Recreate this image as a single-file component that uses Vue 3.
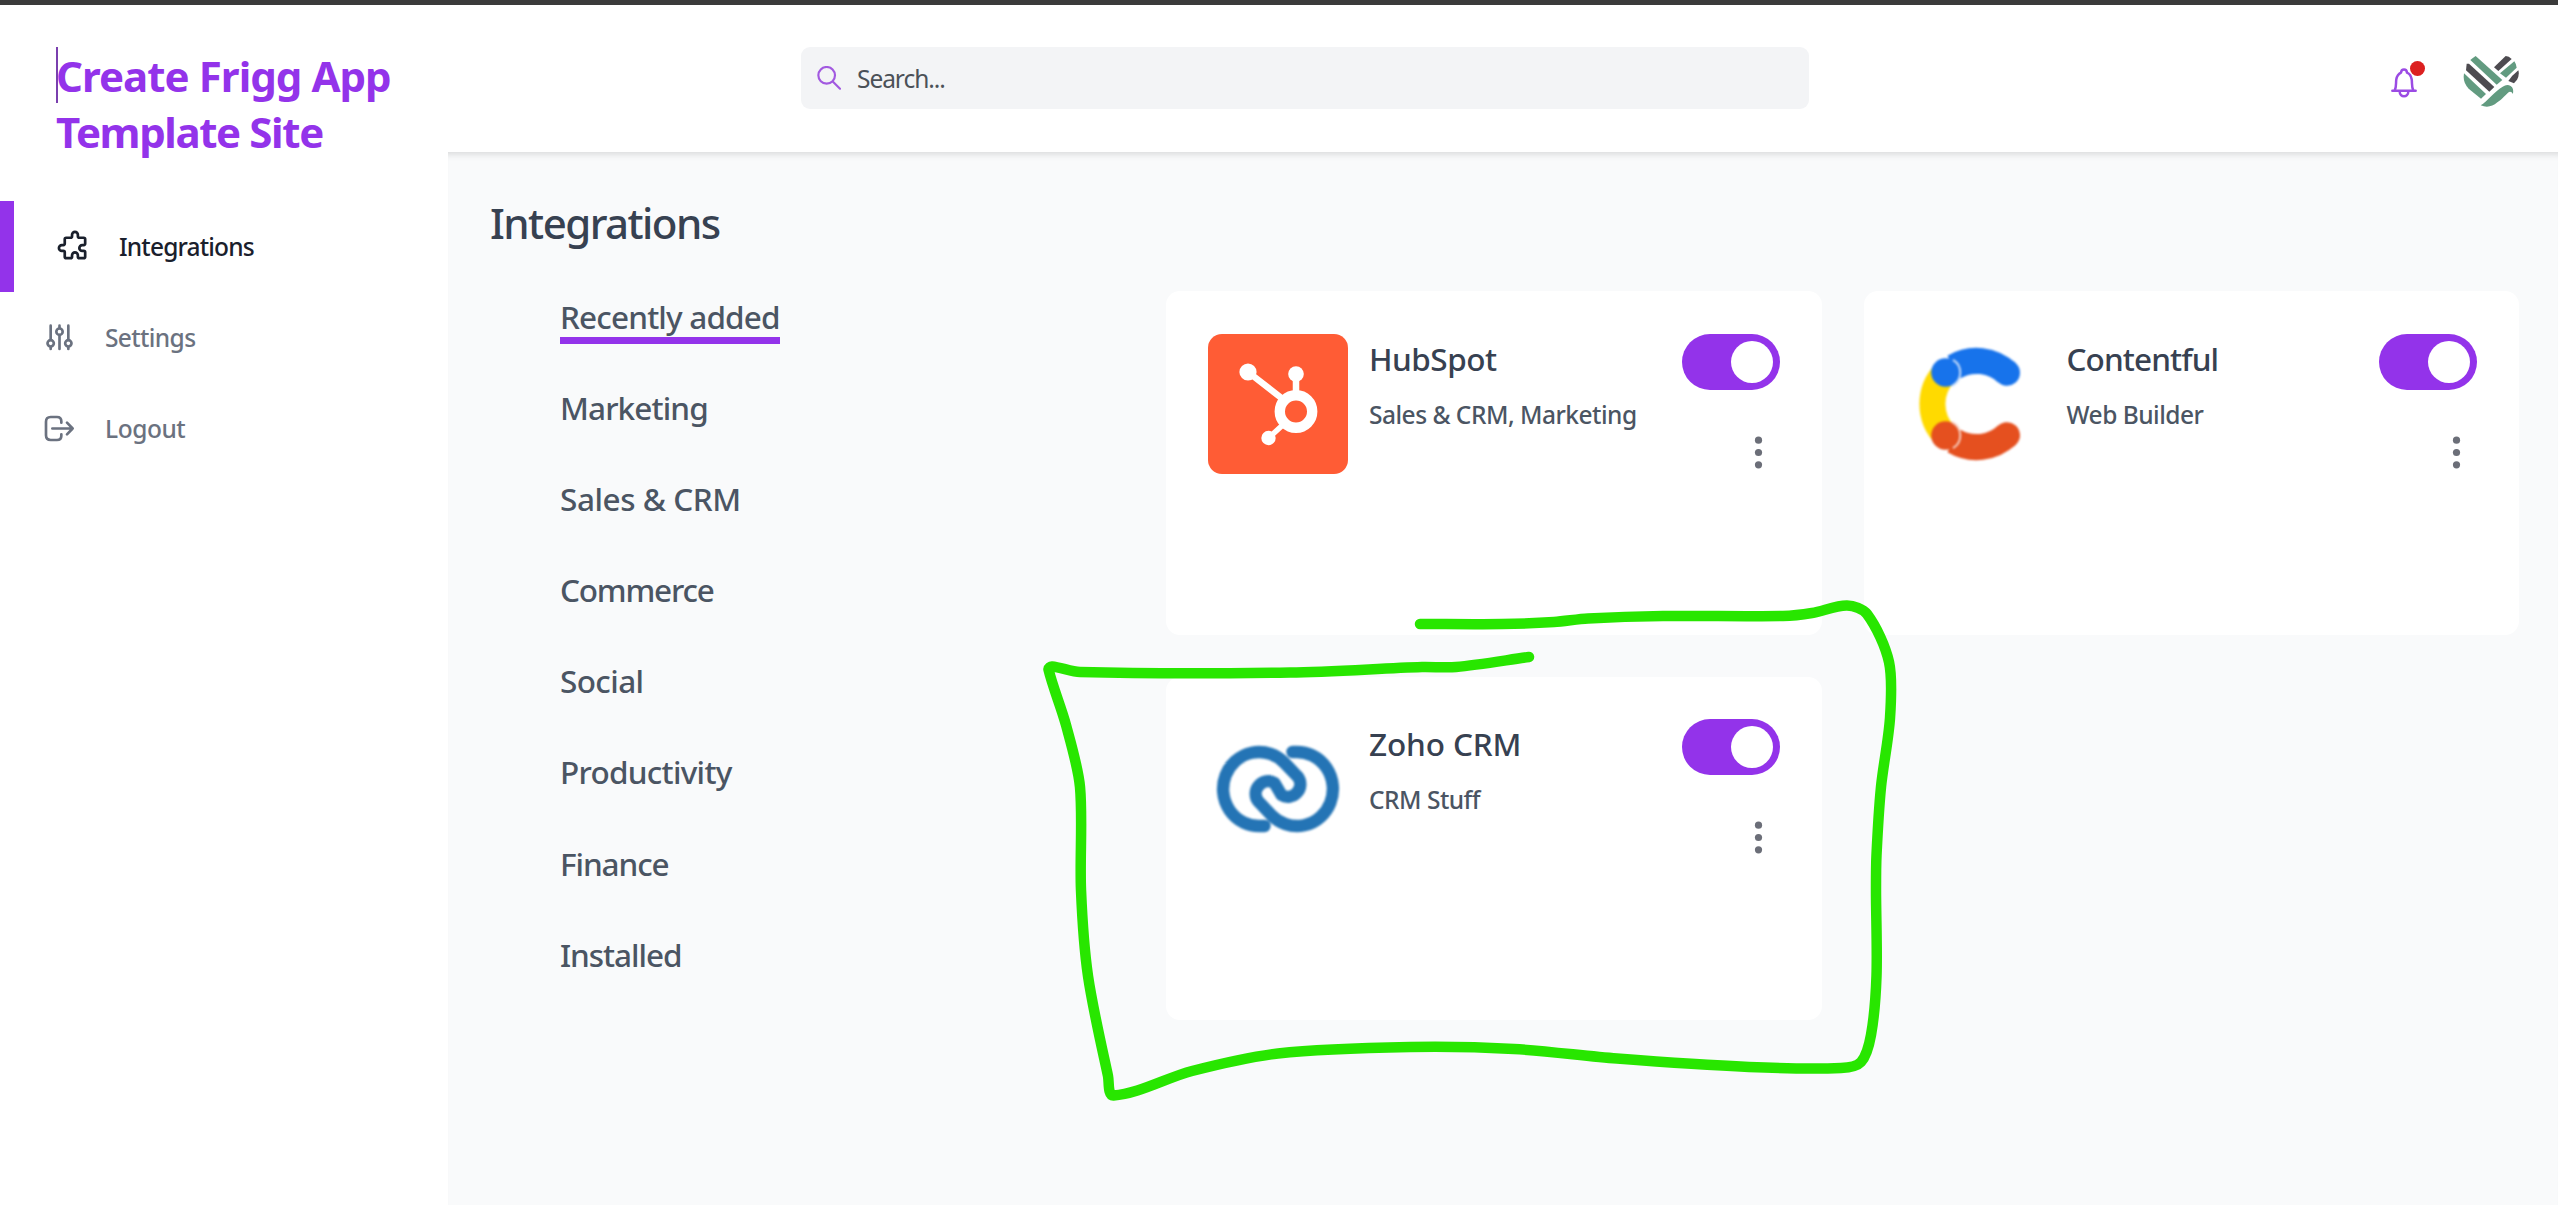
<script setup>
import { ref, computed } from 'vue'

const navItems = [
  { label: 'Integrations', icon: 'puzzle', active: true, tracking: -0.83 },
  { label: 'Settings', icon: 'sliders', tracking: -0.62 },
  { label: 'Logout', icon: 'logout', tracking: -0.45 },
]

const categories = [
  { label: 'Recently added', active: true, tracking: -0.83 },
  { label: 'Marketing', tracking: -0.88 },
  { label: 'Sales & CRM', tracking: -0.45 },
  { label: 'Commerce', tracking: -1.2 },
  { label: 'Social', tracking: -0.6 },
  { label: 'Productivity', tracking: -0.72 },
  { label: 'Finance', tracking: -1.1 },
  { label: 'Installed', tracking: -1.05 },
]

const cards = ref([
  { id: 'hubspot', name: 'HubSpot', tracking: -0.5, category: 'Sales & CRM, Marketing', enabled: true },
  { id: 'contentful', name: 'Contentful', tracking: -0.88, category: 'Web Builder', enabled: true },
  { id: 'zoho', name: 'Zoho CRM', tracking: -0.12, category: 'CRM Stuff', enabled: true },
])

const track = (item) => ({ letterSpacing: `${item.tracking}px` })

// Freehand marker stroke drawn over the page, smoothed between its points.
const marker = [
  [1420, 624], [1502, 624], [1554, 622], [1588, 618.5], [1663, 616], [1783, 616], [1812, 613], [1847, 605.5],
  [1867, 614], [1889, 662], [1890, 718], [1881, 787], [1876.5, 855], [1876, 890], [1876.5, 976],
  [1871, 1035], [1861, 1062], [1841, 1068], [1749, 1067], [1617, 1058.6], [1514, 1049], [1410, 1047],
  [1278, 1053.5], [1192, 1071], [1113.6, 1095.5], [1108, 1076], [1088, 976], [1081, 890], [1080, 787],
  [1066, 725], [1048.5, 669.5], [1052, 666.5], [1080, 672], [1290, 672.5], [1422, 667], [1456, 667], [1529, 657],
]
const markerPath = computed(() => {
  const p = marker
  let d = `M${p[0].join(' ')}`
  for (let i = 0; i < p.length - 1; i++) {
    const a = p[i - 1] || p[i]
    const b = p[i]
    const c = p[i + 1]
    const e = p[i + 2] || c
    const len = Math.hypot(c[0] - b[0], c[1] - b[1])
    const handle = (u, v) => {
      const span = Math.hypot(v[0] - u[0], v[1] - u[1]) || 1
      return [((v[0] - u[0]) / span) * len * 0.3, ((v[1] - u[1]) / span) * len * 0.3]
    }
    const h1 = handle(a, c)
    const h2 = handle(b, e)
    d += `C${b[0] + h1[0]} ${b[1] + h1[1]} ${c[0] - h2[0]} ${c[1] - h2[1]} ${c[0]} ${c[1]}`
  }
  return d
})
</script>

<template>
  <div class="page">
    <div class="window-edge"></div>
    <div class="shell">
      <aside class="sidebar">
        <h1 class="brand"><span class="caret"></span>Create Frigg App<br /><span class="brand-end">Template Site</span></h1>
        <nav class="nav">
          <a v-for="item in navItems" :key="item.label" class="nav-item" :class="{ active: item.active }">
            <svg v-if="item.icon === 'puzzle'" class="nav-icon" viewBox="0 0 24 24" fill="none" stroke="currentColor" stroke-width="1.85" stroke-linecap="round" stroke-linejoin="round">
              <path d="M11 4a2 2 0 114 0v1a1 1 0 001 1h3a1 1 0 011 1v3a1 1 0 01-1 1h-1a2 2 0 100 4h1a1 1 0 011 1v3a1 1 0 01-1 1h-3a1 1 0 01-1-1v-1a2 2 0 10-4 0v1a1 1 0 01-1 1H7a1 1 0 01-1-1v-3a1 1 0 00-1-1H4a2 2 0 110-4h1a1 1 0 001-1V7a1 1 0 011-1h3a1 1 0 001-1V4z" />
            </svg>
            <svg v-else-if="item.icon === 'sliders'" class="nav-icon" viewBox="0 0 105 105" fill="none" stroke="currentColor" stroke-width="8" stroke-linecap="round">
              <path d="M26 17V60M26 81V87M52.5 17V24M52.5 45V87M79 17V60M79 81V87" />
              <circle cx="26" cy="70" r="9.5" /><circle cx="52.5" cy="35" r="9.5" /><circle cx="79" cy="70" r="9.5" />
            </svg>
            <svg v-else class="nav-icon" viewBox="0 0 105 105" fill="none" stroke="currentColor" stroke-width="8" stroke-linecap="round" stroke-linejoin="round">
              <path d="M58 35V31Q58 18 45 18H26Q12 18 12 32V73Q12 87 26 87H45Q58 87 58 74V70M31 52.5H92M75 35L92 52.5L75 70" />
            </svg>
            <span :style="track(item)">{{ item.label }}</span>
          </a>
        </nav>
      </aside>

      <div class="main">
        <header class="topbar">
          <div class="search">
            <svg class="search-icon" viewBox="0 0 72 72" fill="none" stroke="#a259e0" stroke-width="6.5" stroke-linecap="round">
              <circle cx="29" cy="28" r="25" /><path d="M48 47L69 68" />
            </svg>
            <span>Search...</span>
          </div>
          <div class="actions">
            <div class="bell">
              <svg width="26" height="31" viewBox="0 0 78 93" fill="none" stroke="#9b4be4" stroke-width="7.5" stroke-linecap="round" stroke-linejoin="round">
                <path d="M4 71H74M11 70C17 60 14 47 16 37C18 26 24 20 30 17C31 4 47 4 48 17C55 20 60 26 62 37C64 47 61 60 67 70M26 73C26 93 52 93 52 73" />
              </svg>
              <span class="bell-dot"></span>
            </div>
            <svg class="avatar" width="56" height="56" viewBox="0 0 168 168">
              <g fill="#629b80">
                <path d="M22 21Q29 15 38 9L118 81L101 95Z" />
                <path d="M3 61L69 123L54 137L17 107Q2 91 2 72Z" />
                <path d="M154 25Q161 35 161 44L129 74L111 61Z" />
                <path d="M53 157C72 145 98 113 119 101Q132 92 143 99Q153 105 150 123Q145 114 138 117C128 124 119 138 103 148Q80 168 53 157Z" />
              </g>
              <g fill="#4d4b50">
                <path d="M11 32L18 32L94 102L79 116L9 52Z" />
                <path d="M93 43L128 9Q138 9 146 18L106 54Z" />
                <path d="M166 52Q170 66 162 80L153 91L136 84Q146 68 166 52Z" />
              </g>
            </svg>
          </div>
        </header>

        <section class="content">
          <h2 class="heading">Integrations</h2>
          <div class="columns">
            <ul class="categories">
              <li v-for="c in categories" :key="c.label" class="category">
                <span class="category-label" :class="{ active: c.active }" :style="track(c)">{{ c.label }}</span>
              </li>
            </ul>
            <div class="grid">
              <article v-for="card in cards" :key="card.id" class="card">
                <svg v-if="card.id === 'hubspot'" class="logo" viewBox="0 0 140 140">
                  <rect width="140" height="140" rx="14" fill="#ff5c35" />
                  <g stroke="#fff" fill="none" stroke-linecap="round">
                    <path d="M40 38L76 66" stroke-width="6.5" /><path d="M88 40V60" stroke-width="6.5" /><path d="M78 88L60.5 104" stroke-width="5.5" />
                    <circle cx="88" cy="77.5" r="16.2" stroke-width="10.4" />
                  </g>
                  <g fill="#fff"><circle cx="40" cy="38" r="8.6" /><circle cx="88" cy="40" r="7.8" /><circle cx="60.5" cy="104" r="7.2" /></g>
                </svg>
                <svg v-else-if="card.id === 'contentful'" class="logo soft" viewBox="0 0 140 140">
                  <g fill="none" stroke-width="26" stroke-linecap="round">
                    <path d="M39.5 38.5A44.5 44.5 0 0 0 39.5 101.5" stroke="#ffda00" stroke-linecap="butt" />
                    <path d="M48 33A44.5 44.5 0 0 1 101 39" stroke="#1773eb" stroke-linecap="butt" />
                    <path d="M100.5 38.2L101 38.8" stroke="#1773eb" />
                    <path d="M48 107A44.5 44.5 0 0 0 101 101" stroke="#e5501f" stroke-linecap="butt" />
                    <path d="M100.5 101.8L101 101.2" stroke="#e5501f" />
                  </g>
                  <circle cx="39.5" cy="38.5" r="14.3" fill="#1773eb" />
                  <circle cx="39.5" cy="101.5" r="14.3" fill="#e5501f" />
                  <path d="M47 25.8A14.8 14.8 0 0 1 46 51.8" fill="none" stroke="#c5dcfa" stroke-width="2" />
                  <path d="M47 114.2A14.8 14.8 0 0 0 46 88.2" fill="none" stroke="#f7d0c3" stroke-width="2" />
                </svg>
                <svg v-else class="logo soft" viewBox="0 0 140 140" fill="none" stroke="#2474b5" stroke-width="12.4" stroke-linecap="round">
                  <path d="M56.5 107H52A36 37 0 1 1 76.5 43.8L90 58A12.5 12.5 0 0 1 73.5 76L66.5 64A12.5 12.5 0 0 0 50 82L63.5 96.2A36 37 0 1 0 88 33H84.500" stroke-linejoin="round" />
                </svg>
                <div class="card-text">
                  <h3 class="card-name" :style="track(card)">{{ card.name }}</h3>
                  <p class="card-category">{{ card.category }}</p>
                </div>
                <div class="card-actions">
                  <button class="toggle" :class="{ on: card.enabled }" @click="card.enabled = !card.enabled"><span class="knob"></span></button>
                  <svg class="menu" viewBox="0 0 35 35" fill="#6b6e78">
                    <circle cx="17.5" cy="5.2" r="3.6" /><circle cx="17.5" cy="17.5" r="3.6" /><circle cx="17.5" cy="29.8" r="3.6" />
                  </svg>
                </div>
              </article>
            </div>
          </div>
        </section>
      </div>
    </div>

    <svg class="marker" viewBox="0 0 2558 1205" fill="none" stroke="#28e600" stroke-width="10.5" stroke-linecap="round" stroke-linejoin="round">
      <path :d="markerPath" />
    </svg>
  </div>
</template>

<style>
body { margin: 0; overflow: hidden; }
</style>

<style scoped>
* { box-sizing: border-box; }
.page {
  position: relative;
  width: 2558px;
  height: 1205px;
  display: flex;
  flex-direction: column;
  overflow: hidden;
  background: #fff;
  font-family: "Noto Sans", "Open Sans", sans-serif;
}
.window-edge { height: 5px; flex: none; background: #3b3b3b; }
.shell { display: flex; flex: 1; min-height: 0; }
.sidebar { width: 448px; flex: none; padding-top: 43px; }
.brand {
  position: relative;
  margin: 0 0 41px 56px;
  font-size: 42px;
  line-height: 56px;
  font-weight: 700;
  letter-spacing: -0.95px;
  color: #9333ea;
}
.brand-end { letter-spacing: -1.38px; }
.caret { position: absolute; left: 0; top: -1px; width: 2px; height: 56px; background: #7a3fae; }
.nav { display: flex; flex-direction: column; }
.nav-item {
  display: flex;
  align-items: center;
  gap: 28px;
  height: 91px;
  padding-left: 42px;
  font-size: 24.5px;
  line-height: 35px;
  font-weight: 500;
  color: #6b7280;
}
.nav-item.active { border-left: 14px solid #9333ea; color: #1a202c; }
.nav-icon { width: 35px; height: 35px; flex: none; }

.main { flex: 1; min-width: 0; display: flex; flex-direction: column; }
.topbar {
  display: flex;
  height: 147px;
  flex: none;
  padding: 42px 39px 0 353px;
  justify-content: space-between;
  align-items: flex-start;
}
.search {
  display: flex;
  align-items: center;
  width: 1008px;
  height: 62px;
  padding-left: 16px;
  gap: 16px;
  border-radius: 9px;
  background: #f3f4f6;
  font-size: 24.5px;
  line-height: 35px;
  letter-spacing: -1.05px;
  color: #4b5158;
}
.search-icon { width: 24px; height: 24px; }
.actions { display: flex; gap: 46px; padding-top: 6px; }
.bell { position: relative; display: flex; width: 26px; padding-top: 14px; }
.bell-dot { position: absolute; left: 19px; top: 8px; width: 15px; height: 15px; border-radius: 50%; background: #dc2020; }

.content {
  flex: 1;
  padding: 43px 39px 0 42px;
  background: #f9fafb;
  box-shadow: inset 0 8px 7px -6px rgba(0, 0, 0, 0.14);
}
.heading {
  margin: 0;
  font-size: 42px;
  line-height: 56px;
  font-weight: 500;
  letter-spacing: -1.55px;
  color: #374151;
}
.columns { display: flex; margin-top: 40px; }
.categories { width: 676px; flex: none; margin: 0; padding: 4px 0 0 70px; list-style: none; }
.category { height: 91.1px; }
.category-label {
  display: inline-block;
  height: 49px;
  padding-top: 1px;
  font-size: 31.5px;
  line-height: 41px;
  font-weight: 500;
  color: #4b5563;
}
.category-label.active { border-bottom: 7px solid #9333ea; }
.grid {
  flex: 1;
  display: grid;
  grid-template-columns: 1fr 1fr;
  grid-auto-rows: 343.5px;
  gap: 42px;
}
.card { display: flex; align-items: flex-start; padding: 42.6px 42px; border-radius: 14px; background: #fff; }
.logo { width: 140px; height: 140px; flex: none; }
.logo.soft { filter: blur(0.8px); }
.card-text { flex: 1; margin-left: 21px; }
.card-name {
  margin: 0;
  font-size: 31.5px;
  line-height: 49px;
  font-weight: 500;
  color: #374151;
}
.card-category {
  margin: 14px 0 0;
  font-size: 24.5px;
  line-height: 35px;
  font-weight: 500;
  letter-spacing: -0.5px;
  color: #4b5563;
}
.card-actions { display: flex; flex-direction: column; align-items: flex-end; }
.toggle {
  display: flex;
  align-items: center;
  width: 98px;
  height: 56px;
  padding: 0 7px;
  border: 0;
  border-radius: 28px;
  background: #d1d5db;
}
.toggle.on { justify-content: flex-end; background: #9333ea; }
.knob { width: 42px; height: 42px; border-radius: 50%; background: #fff; }
.menu { width: 35px; height: 35px; margin: 45px 3.5px 0 0; }
.marker { position: absolute; left: 0; top: 0; width: 2558px; height: 1205px; pointer-events: none; }
</style>
